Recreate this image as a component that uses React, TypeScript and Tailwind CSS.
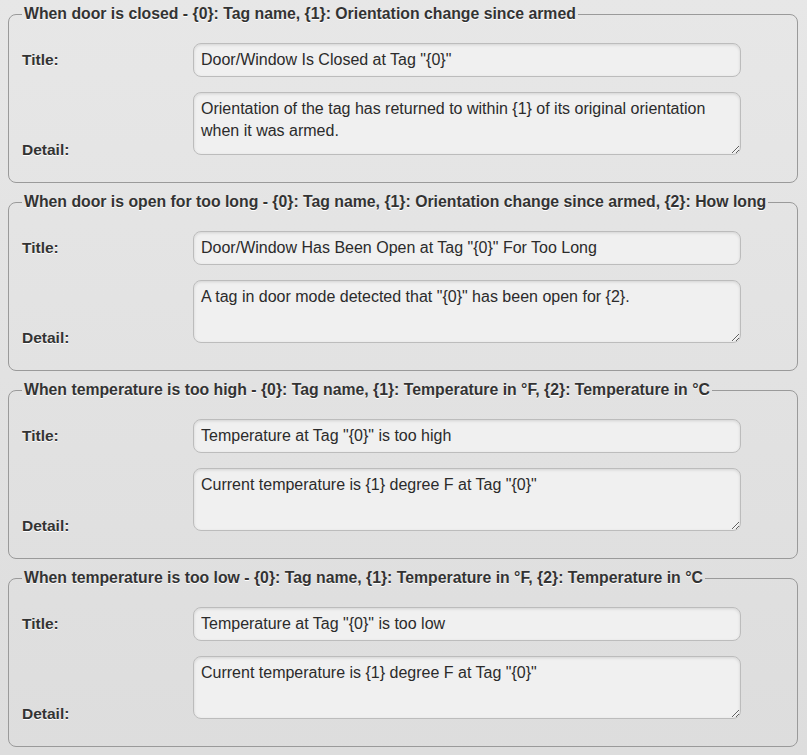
const sections = [
  {
    legend: 'When door is closed - {0}: Tag name, {1}: Orientation change since armed',
    title: 'Door/Window Is Closed at Tag "{0}"',
    detail: 'Orientation of the tag has returned to within {1} of its original orientation when it was armed.',
  },
  {
    legend: 'When door is open for too long - {0}: Tag name, {1}: Orientation change since armed, {2}: How long',
    title: 'Door/Window Has Been Open at Tag "{0}" For Too Long',
    detail: 'A tag in door mode detected that "{0}" has been open for {2}.',
  },
  {
    legend: 'When temperature is too high - {0}: Tag name, {1}: Temperature in °F, {2}: Temperature in °C',
    title: 'Temperature at Tag "{0}" is too high',
    detail: 'Current temperature is {1} degree F at Tag "{0}"',
  },
  {
    legend: 'When temperature is too low - {0}: Tag name, {1}: Temperature in °F, {2}: Temperature in °C',
    title: 'Temperature at Tag "{0}" is too low',
    detail: 'Current temperature is {1} degree F at Tag "{0}"',
  },
];

const font = { fontFamily: '"Liberation Sans", Arial, sans-serif' };

export default function App() {
  return (
    <div
      className="min-h-screen bg-gradient-to-b from-[#e7e7e7] to-[#dddddd] pt-[5px] pb-[8px] pl-[8px] pr-[9px] text-[#333]"
      style={font}
    >
      <div className="flex flex-col gap-[10px]">
        {sections.map((s) => (
          <fieldset key={s.legend} className="rounded-[8px] border border-[#9a9a9a] pl-[13px] pb-[23px]">
            <legend className="whitespace-nowrap px-[2px] text-[15.8px] leading-[18px] font-bold [text-shadow:0_1px_0_#fff]">
              {s.legend}
            </legend>
            <div className="flex flex-col gap-[15px] pt-[20px] pr-[56px]">
              <div className="flex items-center">
                <label className="w-[171px] shrink-0 text-[15.5px] leading-[18px] font-bold [text-shadow:0_1px_0_#fff]">
                  Title:
                </label>
                <input
                  defaultValue={s.title}
                  className="h-[34px] flex-1 rounded-[8px] border border-[#bcbcbc] bg-[#f0f0f0] px-[7px] text-[16px] text-[#2b2b2b] shadow-[inset_0_1px_3px_rgba(0,0,0,0.12)] outline-none"
                />
              </div>
              <div className="flex items-end">
                <label className="w-[171px] shrink-0 text-[15.5px] leading-[18px] font-bold [text-shadow:0_1px_0_#fff]">
                  Detail:
                </label>
                <textarea
                  defaultValue={s.detail}
                  className="mb-[4px] h-[63px] flex-1 rounded-[8px] border border-[#bcbcbc] bg-[#f0f0f0] px-[7px] pt-[5px] text-[16px] leading-[22px] text-[#2b2b2b] shadow-[inset_0_1px_3px_rgba(0,0,0,0.12)] outline-none"
                />
              </div>
            </div>
          </fieldset>
        ))}
      </div>
    </div>
  );
}
